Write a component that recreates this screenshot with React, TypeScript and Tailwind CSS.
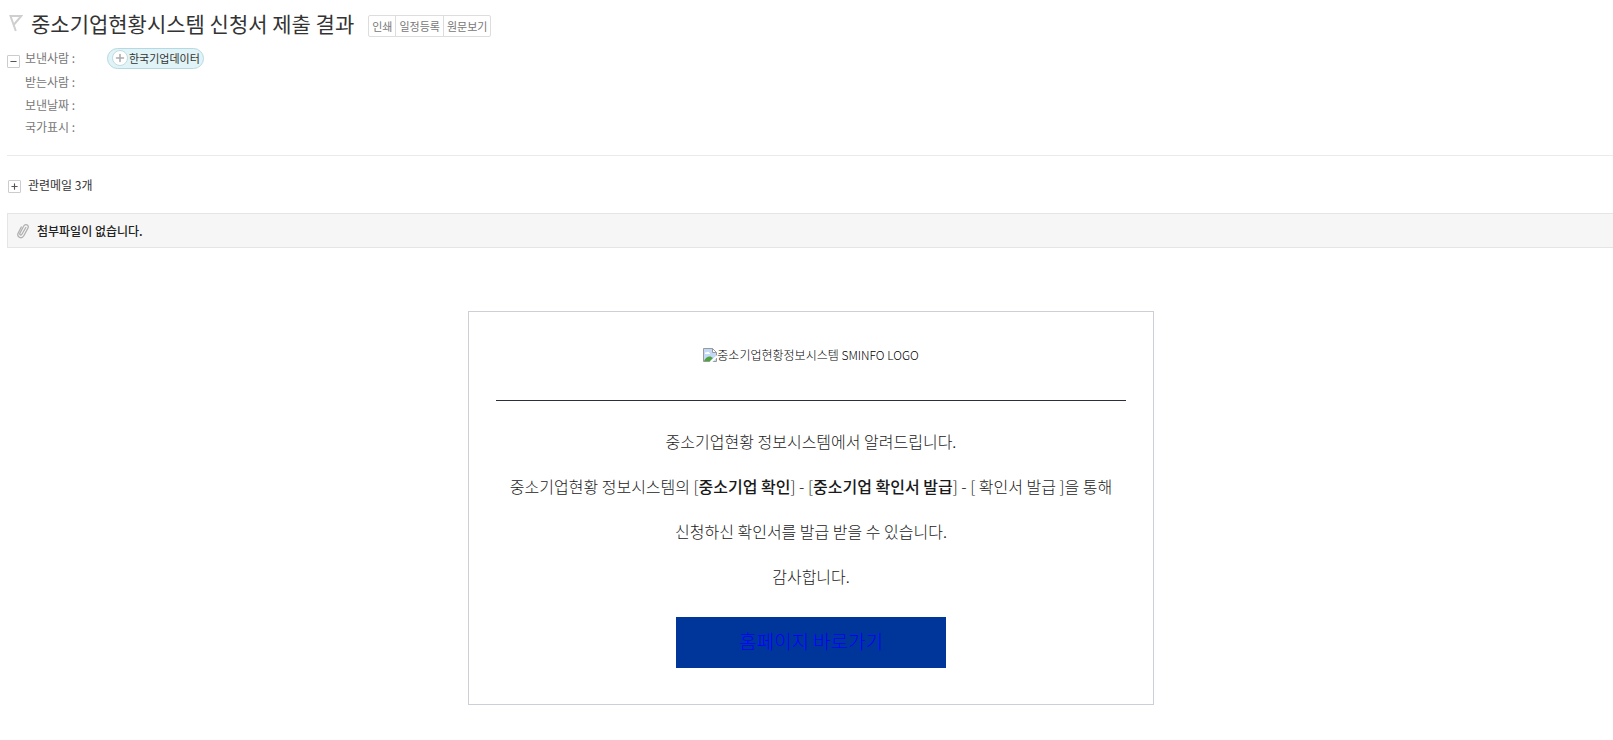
import { Minus, Plus } from "lucide-react";

const mailFields = [
  { label: "보낸사람 :", sender: "한국기업데이터", height: "h-6" },
  { label: "받는사람 :", height: "h-6" },
  { label: "보낸날짜 :", height: "h-[22px]" },
  { label: "국가표시 :", height: "h-[22px]" },
];

const actions = ["인쇄", "일정등록", "원문보기"];

function FlagIcon() {
  return (
    <svg width="14" height="18" viewBox="0 0 14 18" fill="none" stroke="#cfcfcf" strokeWidth="2" aria-hidden="true">
      <path d="M6.800 17L1.500 2H12.300L5 10.500" />
    </svg>
  );
}

function ClipIcon() {
  return (
    <svg width="14" height="16" viewBox="0 0 14 16" fill="none" stroke="#b0b0b0" strokeWidth="1.300" strokeLinecap="round" aria-hidden="true">
      <path d="M9.800 4.500L5.900 11.300c-.8 1.400-2.700.5-2-1L7.600 3.300C9.100.3 13.300 1.700 12 5L7.800 12.800c-2 3.600-7.300 1.600-5.700-2.600L5.300 4" />
    </svg>
  );
}

function BrokenImageIcon() {
  return (
    <svg width="14" height="14" viewBox="0 0 14 14" aria-hidden="true">
      <path d="M.5.5h9l4 4v9H.5z" fill="#c3d9f7" stroke="#9a9a9a" />
      <path d="M2 5.500c0-1 1-1.500 1.700-1 .6-1.300 2.300-1 2.500.2.800 0 1 .8.800 1.300H2z" fill="#fff" />
      <path d="M1 13c1-3 4-5 6.500-4.500L10 10l-3 3z" fill="#4ea33b" />
      <path d="M9.500.5v4h4z" fill="#fff" stroke="#9a9a9a" />
      <path d="M6.500 14L14 7v2.500L9.500 14z" fill="#fff" />
    </svg>
  );
}

function ToggleButton({ expanded, label }: { expanded: boolean; label: string }) {
  const Icon = expanded ? Minus : Plus;
  return (
    <button
      type="button"
      aria-label={label}
      aria-expanded={expanded}
      className="flex size-[13px] shrink-0 items-center justify-center rounded-[1px] border border-[#cccccc] bg-white"
    >
      <Icon className="size-[9px] text-[#555555]" strokeWidth={3} />
    </button>
  );
}

function MailHeader() {
  return (
    <header className="border-b border-[#ebebeb] pb-4">
      <div className="flex h-[46px] items-center">
        <div className="flex w-6 shrink-0 pl-0.5">
          <FlagIcon />
        </div>
        <h1 className="text-[21px] leading-8 text-[#333333]">중소기업현황시스템 신청서 제출 결과</h1>
        <div className="mt-1.5 ml-[14px] flex h-[22px] divide-x divide-[#dddddd] rounded-[2px] border border-[#dddddd]">
          {actions.map((action) => (
            <button key={action} type="button" className="px-[3px] text-[11px] leading-5 text-[#777777]">
              {action}
            </button>
          ))}
        </div>
      </div>
      <div className="flex">
        <div className="w-[18px] shrink-0 pt-[9px]">
          <ToggleButton expanded label="메일 정보 접기" />
        </div>
        <dl className="pb-px">
          {mailFields.map((field) => (
            <div key={field.label} className={`flex items-center ${field.height}`}>
              <dt className="w-[82px] text-[12px] leading-5 text-[#777777]">{field.label}</dt>
              <dd>
                {field.sender && (
                  <button
                    type="button"
                    className="flex h-[21px] items-center gap-px rounded-full border border-[#b5d9e2] bg-[#e0f3f6] pr-[3px] pl-1 text-[11px] leading-[19px] text-[#333333]"
                  >
                    <span className="flex size-4 items-center justify-center rounded-full border border-[#c3dbe2] bg-white">
                      <Plus className="size-3 text-[#aaaaaa]" strokeWidth={3} />
                    </span>
                    {field.sender}
                  </button>
                )}
              </dd>
            </div>
          ))}
        </dl>
      </div>
    </header>
  );
}

function NoticeCard() {
  return (
    <article className="mx-auto w-full max-w-[686px] border border-[#cccfd8] px-[27px] py-9 text-center font-light">
      <div className="flex items-center justify-center border-b border-[#2c2f38] pb-[38px] text-[12px] leading-[14px] text-black">
        <BrokenImageIcon />
        <span>중소기업현황정보시스템 SMINFO LOGO</span>
      </div>
      <div className="pt-[18px] text-[16px] leading-[45px] text-[#1a1a1a]">
        <p>중소기업현황 정보시스템에서 알려드립니다.</p>
        <p>
          중소기업현황 정보시스템의 [<strong className="font-medium">중소기업 확인</strong>] - [
          <strong className="font-medium">중소기업 확인서 발급</strong>] - [ 확인서 발급 ]을 통해
        </p>
        <p>신청하신 확인서를 발급 받을 수 있습니다.</p>
        <p>감사합니다.</p>
      </div>
      <a
        href="#home"
        className="mx-auto mt-[18px] block w-[270px] bg-[#003699] pb-[3px] text-[19px] leading-[48px] text-[#0000ff]"
      >
        홈페이지 바로가기
      </a>
    </article>
  );
}

export default function App() {
  return (
    <main className="bg-white pl-[7px] font-['Noto_Sans_CJK_KR',sans-serif]">
      <MailHeader />

      <div className="mt-[18px] mb-[15px] flex h-6 items-center gap-[7px] pl-px">
        <ToggleButton expanded={false} label="관련메일 펼치기" />
        <span className="pb-0.5 text-[12px] leading-5 text-[#333333]">관련메일 3개</span>
      </div>

      <div className="flex h-[35px] items-center gap-[7px] border border-r-0 border-[#e5e5e5] bg-[#f6f6f6] pl-2">
        <ClipIcon />
        <span className="text-[12px] leading-5 font-medium text-[#222222]">첨부파일이 없습니다.</span>
      </div>

      <div className="mt-[63px] pl-0.5">
        <NoticeCard />
      </div>
    </main>
  );
}
